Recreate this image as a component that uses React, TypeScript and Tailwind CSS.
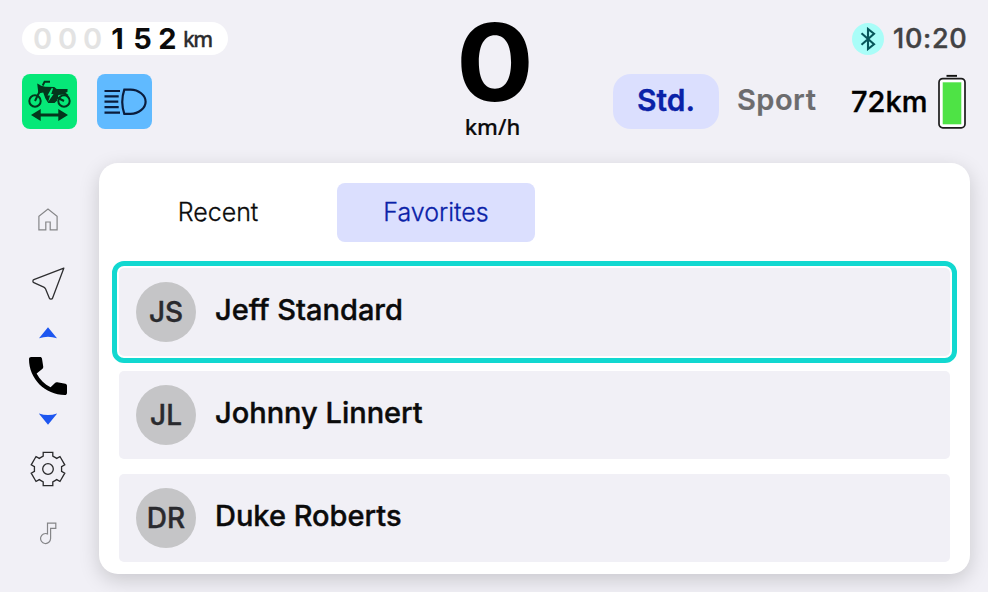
import type { ReactNode } from "react";

const contacts = [
  { initials: "JS", name: "Jeff Standard", selected: true },
  { initials: "JL", name: "Johnny Linnert", selected: false },
  { initials: "DR", name: "Duke Roberts", selected: false },
];

// six flat teeth around the center
const gearPoints = Array.from({ length: 6 }, (_, i) => {
  const a = (i * Math.PI) / 3;
  return [
    [-4.8, -12.9],
    [-4.8, -16.6],
    [4.8, -16.6],
    [4.8, -12.9],
  ]
    .map(([x, y]) => `${(x * Math.cos(a) - y * Math.sin(a)).toFixed(2)},${(x * Math.sin(a) + y * Math.cos(a)).toFixed(2)}`)
    .join(" ");
}).join(" ");

function MotorcycleIcon() {
  return (
    <svg viewBox="0 0 55 55" className="h-full w-full" fill="none" stroke="#04361c">
      <circle cx="13" cy="27" r="5.7" strokeWidth="2" />
      <circle cx="42" cy="27" r="5.7" strokeWidth="2" />
      <path d="M13 27 19.8 13M42 27l-8-4" strokeWidth="2" />
      <path d="M20.7 11.5 22.6 7.8H28" strokeWidth="1.9" />
      <path d="M15.2 9.5l2.4 1.2 1.4 1 4.2 1 9 .2 2.5 2.2H45.6l-.2 3-2 .7 3.2 2.2-1 .9-4.2-1.5-5 .6-1.4 5.7-2.5 2.2h-6.3l-2.8-4.3-2.2-6-4.8 1z" fill="#04361c" stroke="none" />
      <path d="M29.5 14.2l-4 7.4h2.6l-2 6.4 5.5-8h-2.4l2-5.8z" fill="#06e878" stroke="none" />
      <path d="M9 41l9.7-6v4.4h17.6V35L46 41l-9.7 6v-4.4H18.7V47z" fill="#04361c" stroke="none" />
    </svg>
  );
}

function HeadlightIcon() {
  return (
    <svg viewBox="0 0 55 55" className="h-full w-full" fill="none" stroke="#0a1c3c" strokeWidth="2.2">
      <path d="M7.5 17h15.5M7.5 22.3h14.2M7.5 27.7h13.8M7.5 33.2h14.2M7.5 38.6h15.5" />
      <path d="M27.3 15.6h6.3c8 0 15 5.7 15 12.1s-7 12.1-15 12.1h-6.3c-2.7-8-2.7-16.2 0-24.2z" />
    </svg>
  );
}

function BatteryIcon() {
  return (
    <svg viewBox="0 0 28 55" className="h-[55px] w-[28px]">
      <path d="M8.5 .9h10.5v1.9H8.5z" fill="#111" />
      <rect x="1" y="4.6" width="26" height="49.2" rx="3.8" fill="#fff" stroke="#1c1c1c" strokeWidth="1.7" />
      <rect x="4.7" y="8.3" width="18.6" height="42" fill="#4ee345" />
    </svg>
  );
}

function Sidebar() {
  return (
    <nav className="flex w-[99px] flex-col items-center pr-[3px] pt-[45px]">
      <svg viewBox="0 0 20 23" className="h-[23px] w-[20px]" fill="none" stroke="#858588" strokeWidth="1.2">
        <path d="M.9 21.8V8.3L10 1l9.1 7.3v13.5h-6.9V14H7.8v7.8z" />
      </svg>
      <svg viewBox="0 0 33 34" className="mt-[36px] h-[34px] w-[33px]" fill="none" stroke="#2e2e30" strokeWidth="1.3" strokeLinejoin="round">
        <path d="M31.8 1.2 1.8 12.7c-1.2.5-1.2 2.5 0 3l10 4.4c1 .5 1.4.9 1.8 1.8l3.8 9.3c.5 1.2 2.7 1.2 3.1 0z" />
      </svg>
      <svg viewBox="0 0 18 12" className="mt-[26px] h-[12px] w-[18px]" fill="#1d56f0">
        <path d="M9 .3 18.2 11.4Q9 8.2-.2 11.4z" />
      </svg>
      <svg viewBox="3 3 18 18" className="mt-[18px] h-[38px] w-[38px]">
        <path d="M6.62 10.79c1.44 2.83 3.76 5.14 6.59 6.59l2.1-2.1c.3-.3.7-.42 1.1-.32l3.8.75c.45.1.79.45.79.9V20c0 .55-.45 1-1 1-9.39 0-17-7.61-17-17 0-.55.45-1 1-1h4.3c.42 0 .77.3.84.7l.6 3.85c.06.4-.05.75-.32 1.02z" />
      </svg>
      <svg viewBox="0 0 18 12" className="mt-[18px] h-[12px] w-[18px]" fill="#1d56f0">
        <path d="M9 11.7-.2.5Q9 3.7 18.2.5z" />
      </svg>
      <svg viewBox="-18 -18 36 36" className="mt-[26px] h-[36px] w-[36px]" fill="none" stroke="#2a2a2c" strokeWidth="1.3">
        <polygon points={gearPoints} />
        <circle r="5.3" />
      </svg>
      <svg viewBox="0 0 17 23" className="mt-[35px] h-[23px] w-[17px]" fill="none" stroke="#858588" strokeWidth="1.2">
        <path d="M7.5 11.9V1.2h8.3v5.2h-5.2v10.2a5 5 0 1 1-3.1-4.7z" />
      </svg>
    </nav>
  );
}

function StatusTile({ className, children }: { className: string; children: ReactNode }) {
  return <div className={`h-[55px] w-[55px] rounded-[8px] ${className}`}>{children}</div>;
}

function Header() {
  return (
    <header className="flex h-[163px] px-[22px] pt-[22px]">
      <div className="w-[400px]">
        <div className="flex h-[33px] w-[206px] items-center rounded-full bg-white pl-[8px]">
          {"000152".split("").map((digit, i) => (
            <span
              key={i}
              className={`w-[25px] text-center text-[29px] leading-[33px] ${i < 3 ? "font-semibold text-[#e3e3e3]" : "font-bold text-[#0b0b0b]"}`}
            >
              {digit}
            </span>
          ))}
          <span className="ml-[3px] pt-[2px] font-['Noto_Sans'] text-[21px] font-medium leading-[31px] tracking-[-1.5px] text-[#2c2c2e] [-webkit-text-stroke:0.3px_#2c2c2e]">
            km
          </span>
        </div>
        <div className="mt-[19px] flex gap-[20px]">
          <StatusTile className="bg-[#06e878]">
            <MotorcycleIcon />
          </StatusTile>
          <StatusTile className="bg-[#60baff]">
            <HeadlightIcon />
          </StatusTile>
        </div>
      </div>

      <div className="flex w-[147px] flex-col items-center">
        <span className="h-[80px] scale-x-[1.08] text-[107px] font-bold leading-[81px] text-black">0</span>
        <span className="mr-[6px] mt-[8px] font-['Noto_Sans'] text-[22px] font-medium leading-[33px] text-[#0b0b0b] [-webkit-text-stroke:0.2px_#0b0b0b]">
          km/h
        </span>
      </div>

      <div className="flex flex-1 flex-col items-end">
        <div className="flex h-[33px] items-center gap-[9px]">
          <div className="flex h-[32px] w-[32px] items-center justify-center rounded-full bg-[#a9fdf8]">
            <svg viewBox="0 0 16 24" className="h-[24px] w-[16px]" fill="none" stroke="#07565a" strokeWidth="2.1">
              <path d="M1.5 6.2 14 17.2 8 22V2l6 4.8L1.5 17.8" />
            </svg>
          </div>
          <span className="w-[73px] whitespace-nowrap text-[27px] font-medium leading-[31px] tracking-[0.7px] text-[#424244] [-webkit-text-stroke:0.4px_#424244]">
            10:20
          </span>
        </div>
        <div className="mt-[19px] flex h-[55px] items-center">
          <div className="flex h-[55px] w-[106px] items-center justify-center rounded-[18px] bg-[#dbdffe] pb-[3px] text-[30px] font-semibold text-[#0a22a8] [-webkit-text-stroke:0.3px_#0a22a8]">
            Std.
          </div>
          <span className="ml-[18px] w-[80px] whitespace-nowrap pb-[3px] text-[29px] font-semibold tracking-[0.5px] text-[#6c6c6e] [-webkit-text-stroke:0.2px_#6c6c6e]">
            Sport
          </span>
          <span className="ml-[34px] w-[76px] whitespace-nowrap text-[29px] font-medium text-black [-webkit-text-stroke:0.4px_#000]">
            72km
          </span>
          <div className="ml-[11px]">
            <BatteryIcon />
          </div>
        </div>
      </div>
    </header>
  );
}

export default function App() {
  return (
    <div className="h-[594px] w-[990px] overflow-hidden bg-white font-['Inter',sans-serif]">
      <div className="h-[592px] w-[988px] overflow-hidden bg-[#f1f0f6]">
        <Header />
        <div className="flex">
          <Sidebar />
          <main className="h-[411px] w-[871px] rounded-[19px] bg-white px-[20px] pt-[20px] shadow-[0_6px_20px_rgba(0,0,0,0.17)]">
            <div className="flex">
              <button className="h-[59px] w-[198px] rounded-[8px] text-[25px] font-light text-[#0b0b0b] [-webkit-text-stroke:0.3px_#0b0b0b]">
                Recent
              </button>
              <button className="ml-[20px] h-[59px] w-[198px] rounded-[8px] bg-[#dbdffe] text-[25px] font-light text-[#0a22a8] [-webkit-text-stroke:0.3px_#0a22a8]">
                Favorites
              </button>
            </div>
            <ul className="mt-[26px] flex flex-col gap-[15px]">
              {contacts.map(({ initials, name, selected }) => (
                <li
                  key={initials}
                  className={`flex h-[88px] items-center rounded-[5px] bg-[#f1f0f6] pl-[17px] ${
                    selected ? "outline-[5px] outline-offset-[2px] outline-[#12d8d0]" : ""
                  }`}
                >
                  <span className="flex h-[60px] w-[60px] items-center justify-center rounded-full bg-[#c5c5c7] text-[28px] font-medium text-[#2a2a2e] [-webkit-text-stroke:0.4px_#2a2a2e]">
                    {initials}
                  </span>
                  <span className="ml-[19px] pb-[4px] text-[29px] font-medium text-[#0b0b0b] [-webkit-text-stroke:0.4px_#0b0b0b]">
                    {name}
                  </span>
                </li>
              ))}
            </ul>
          </main>
        </div>
      </div>
    </div>
  );
}
